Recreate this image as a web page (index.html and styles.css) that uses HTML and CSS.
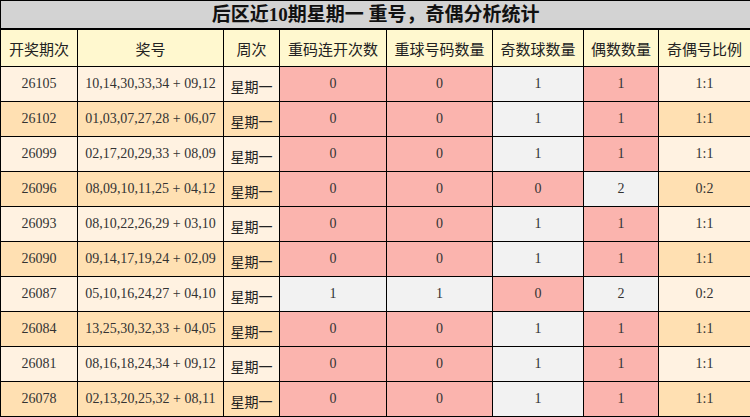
FILE: index.html
```html
<!DOCTYPE html>
<html lang="zh">
<head>
<meta charset="utf-8">
<title>后区近10期星期一 重号，奇偶分析统计</title>
<link rel="stylesheet" href="styles.css">
</head>
<body>
<table class="stats">
  <colgroup>
    <col class="c-period"><col class="c-nums"><col class="c-week"><col class="c-rep"><col class="c-repball"><col class="c-odd"><col class="c-even"><col class="c-ratio">
  </colgroup>
  <thead>
    <tr><th class="title" colspan="8">后区近10期星期一 重号，奇偶分析统计</th></tr>
    <tr class="head">
      <th>开奖期次</th><th>奖号</th><th>周次</th><th>重码连开次数</th><th>重球号码数量</th><th>奇数球数量</th><th>偶数数量</th><th>奇偶号比例</th>
    </tr>
  </thead>
  <tbody>
    <tr class="light"><td>26105</td><td>10,14,30,33,34 + 09,12</td><td class="cjk">星期一</td><td class="pink">0</td><td class="pink">0</td><td class="gray">1</td><td class="pink">1</td><td>1:1</td></tr>
    <tr class="dark"><td>26102</td><td>01,03,07,27,28 + 06,07</td><td class="cjk">星期一</td><td class="pink">0</td><td class="pink">0</td><td class="gray">1</td><td class="pink">1</td><td>1:1</td></tr>
    <tr class="light"><td>26099</td><td>02,17,20,29,33 + 08,09</td><td class="cjk">星期一</td><td class="pink">0</td><td class="pink">0</td><td class="gray">1</td><td class="pink">1</td><td>1:1</td></tr>
    <tr class="dark"><td>26096</td><td>08,09,10,11,25 + 04,12</td><td class="cjk">星期一</td><td class="pink">0</td><td class="pink">0</td><td class="pink">0</td><td class="gray">2</td><td>0:2</td></tr>
    <tr class="light"><td>26093</td><td>08,10,22,26,29 + 03,10</td><td class="cjk">星期一</td><td class="pink">0</td><td class="pink">0</td><td class="gray">1</td><td class="pink">1</td><td>1:1</td></tr>
    <tr class="dark"><td>26090</td><td>09,14,17,19,24 + 02,09</td><td class="cjk">星期一</td><td class="pink">0</td><td class="pink">0</td><td class="gray">1</td><td class="pink">1</td><td>1:1</td></tr>
    <tr class="light"><td>26087</td><td>05,10,16,24,27 + 04,10</td><td class="cjk">星期一</td><td class="gray">1</td><td class="gray">1</td><td class="pink">0</td><td class="gray">2</td><td>0:2</td></tr>
    <tr class="dark"><td>26084</td><td>13,25,30,32,33 + 04,05</td><td class="cjk">星期一</td><td class="pink">0</td><td class="pink">0</td><td class="gray">1</td><td class="pink">1</td><td>1:1</td></tr>
    <tr class="light"><td>26081</td><td>08,16,18,24,34 + 09,12</td><td class="cjk">星期一</td><td class="pink">0</td><td class="pink">0</td><td class="gray">1</td><td class="pink">1</td><td>1:1</td></tr>
    <tr class="dark"><td>26078</td><td>02,13,20,25,32 + 08,11</td><td class="cjk">星期一</td><td class="pink">0</td><td class="pink">0</td><td class="gray">1</td><td class="pink">1</td><td>1:1</td></tr>
  </tbody>
</table>
</body>
</html>
```
FILE: styles.css
```css
html, body {
  margin: 0;
  padding: 0;
  background: #ffffff;
}

.stats {
  width: 750px;
  border-collapse: collapse;
  table-layout: fixed;
  font-family: "Liberation Serif", "Noto Sans CJK SC", serif;
  color: #333333;
}

.c-period { width: 77px; }
.c-nums { width: 146px; }
.c-week { width: 56px; }
.c-rep { width: 107px; }
.c-repball { width: 106px; }
.c-odd { width: 91px; }
.c-even { width: 75px; }
.c-ratio { width: 92px; }

.stats th,
.stats td {
  border: 1px solid #000000;
  padding: 0;
  text-align: center;
  vertical-align: middle;
  white-space: nowrap;
  overflow: hidden;
}

.title {
  height: 27px;
  background: #d3d3d3;
  font-size: 19px;
  font-weight: bold;
  color: #111111;
  border-bottom-width: 2px !important;
  line-height: 27px;
}

.head th {
  height: 36px;
  background: #fff8cf;
  font-family: "Noto Sans CJK SC", sans-serif;
  font-size: 15px;
  font-weight: normal;
  color: #222222;
}

.stats td {
  height: 34px;
  font-size: 14px;
}

.stats td.cjk {
  font-family: "Noto Sans CJK SC", sans-serif;
  font-size: 14px;
  color: #222222;
  padding-top: 3px;
  height: 31px;
}

.light td { background: #fff2e1; }
.dark td { background: #ffe0b2; }

.stats td.pink { background: #fbb4ae; }
.stats td.gray { background: #f2f2f2; }
```
